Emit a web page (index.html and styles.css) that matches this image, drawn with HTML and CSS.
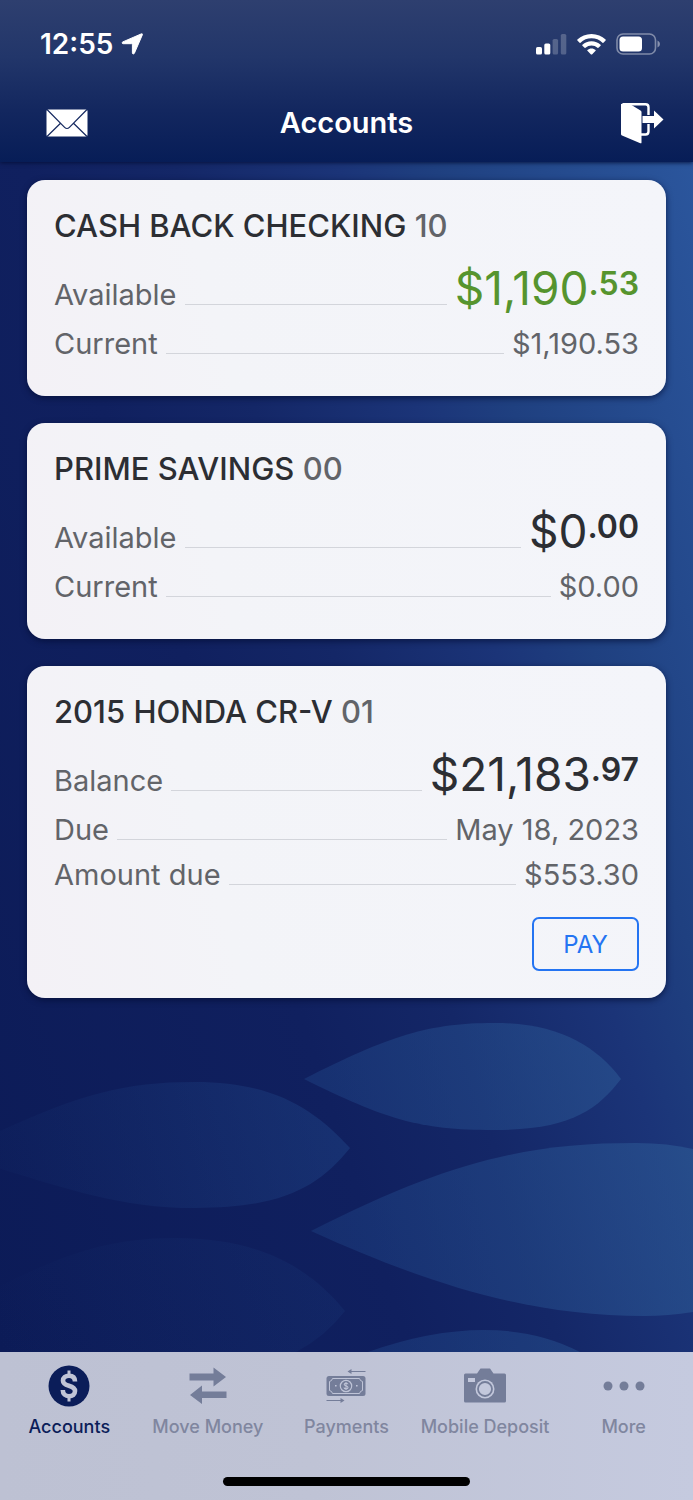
FILE: index.html
```html
<!DOCTYPE html>
<html lang="en">
<head>
<meta charset="utf-8">
<meta name="viewport" content="width=device-width, initial-scale=1">
<title>Accounts</title>
<link rel="stylesheet" href="styles.css">
</head>
<body>
<div class="app">
  <header class="header">
    <div class="status">
      <div class="status-left">
        <span class="time">12:55</span>
        <svg class="location" viewBox="0 0 22 22" aria-hidden="true"><path stroke="#fff" stroke-linejoin="round" d="M20.500.800C21.200.600 21.700 1 21.400 1.700L13.400 20.200C12.900 21.300 11.400 21.200 11.400 19.900V11.900C11.400 11 11.100 10.700 10.200 10.700H2.200C.900 10.700.700 9.400 1.800 8.900Z"/></svg>
      </div>
      <div class="status-right">
        <svg class="signal" viewBox="0 0 31 21" aria-hidden="true"><rect x="0" y="13" width="6" height="7.500" rx="1.600"/><rect x="8.300" y="9.500" width="6" height="11" rx="1.600"/><g opacity=".22"><rect x="16.600" y="5" width="5.500" height="15.500" rx="1.600"/><rect x="24.800" y="0" width="5.500" height="20.500" rx="1.600"/></g></svg>
        <svg class="wifi" viewBox="0 0 29 21" aria-hidden="true"><path d="M14.500 0C9 0 4 2.100.400 5.600Q0 6 .400 6.500L2.600 8.700Q3.100 9.100 3.500 8.700A15.900 15.900 0 0 1 25.500 8.700Q25.900 9.100 26.400 8.700L28.600 6.500Q29 6 28.600 5.600C25 2.100 20 0 14.500 0Z"/><path d="M14.500 7.300C11 7.300 7.800 8.600 5.400 10.800Q5 11.200 5.400 11.700L7.600 13.800Q8 14.200 8.500 13.800A8.900 8.900 0 0 1 20.500 13.800Q21 14.200 21.400 13.800L23.600 11.700Q24 11.200 23.600 10.800C21.200 8.600 18 7.300 14.500 7.300Z"/><path d="M14.500 14.500C12.900 14.500 11.500 15.100 10.400 16Q10 16.400 10.400 16.800L14 20.400Q14.500 20.800 15 20.400L18.600 16.800Q19 16.400 18.600 16C17.500 15.100 16.100 14.500 14.500 14.500Z"/></svg>
        <svg class="battery" viewBox="0 0 45 22" aria-hidden="true"><rect x="1" y="1" width="38.500" height="20" rx="6" fill="none" stroke="#fff" stroke-opacity=".42" stroke-width="1.600"/><rect x="3.500" y="3.500" width="22.500" height="15" rx="3.500"/><path d="M41.500 7.500Q44 8.500 44 11T41.500 14.500Z" opacity=".45"/></svg>
      </div>
    </div>
    <div class="navbar">
      <button class="icon-button" type="button" aria-label="Messages">
        <svg class="mail" viewBox="0 0 42 28" aria-hidden="true"><rect x=".500" y=".500" width="41" height="27" rx="1.500"/><path d="M1 .500 18.600 18.300Q21 20.700 23.400 18.300L41 .500M1 27.500 14.500 14.200M41 27.500 27.500 14.200" fill="none" stroke="#14285f" stroke-width="1.200"/></svg>
      </button>
      <h1 class="title">Accounts</h1>
      <button class="icon-button icon-button-end" type="button" aria-label="Log out">
        <svg class="logout" viewBox="0 0 43 41" aria-hidden="true"><path d="M1.500 1.200H24.500Q27.500 1.200 27.500 4.200V12M27.500 21V28.500Q27.500 31.500 24.500 31.500H20" fill="none" stroke="#fff" stroke-width="2.400"/><path d="M0 1 3 .500H8L19.500 7.500Q20.500 8 20.500 9V39.500Q20.500 40.700 19.300 40.200L1 32.500Q0 32 0 31Z"/><path d="M21.500 13H33V7.500L42.500 16.500 33 25.500V20H21.500Z"/></svg>
      </button>
    </div>
  </header>

  <main class="content">
    <svg class="leaves" viewBox="0 0 693 352" aria-hidden="true">
      <defs>
        <linearGradient id="leaf" gradientUnits="userSpaceOnUse" x1="0" y1="250" x2="693" y2="60"><stop offset="0" stop-color="#1f4686" stop-opacity=".04"/><stop offset=".5" stop-color="#244f92" stop-opacity=".36"/><stop offset="1" stop-color="#305f98" stop-opacity=".56"/></linearGradient>
        <linearGradient id="leaf-dim" gradientUnits="userSpaceOnUse" x1="0" y1="352" x2="350" y2="200"><stop offset="0" stop-color="#1f4686" stop-opacity="0"/><stop offset="1" stop-color="#1f4686" stop-opacity=".2"/></linearGradient>
      </defs>
      <path fill="url(#leaf)" d="M304 79C390 35 430 23 494 23S595 45 621 79C597 110 570 130 494 130S385 119 304 79Z"/>
      <path fill="url(#leaf)" d="M-30 145C70 98 115 82 195 82S315 110 350 148C318 188 280 208 195 208S50 182-30 160Z"/>
      <path fill="url(#leaf)" d="M311 231C450 160 530 143 636 143Q668 143 693 149V312Q668 316 644 316C530 316 430 285 311 231Z"/>
      <path fill="url(#leaf-dim)" d="M-30 300C45 265 90 238 175 238S310 268 345 311Q325 337 296 352H-30Z"/>
      <path fill="url(#leaf)" d="M368 352Q430 330 484 330T580 352Z"/>
    </svg>

    <section class="card">
      <h2 class="card-title">CASH BACK CHECKING <span class="suffix">10</span></h2>
      <dl class="rows">
        <div class="row row-main"><dt>Available</dt><dd class="amount positive">$1,190<span class="cents">.53</span></dd></div>
        <div class="row"><dt>Current</dt><dd>$1,190.53</dd></div>
      </dl>
    </section>

    <section class="card">
      <h2 class="card-title">PRIME SAVINGS <span class="suffix">00</span></h2>
      <dl class="rows">
        <div class="row row-main"><dt>Available</dt><dd class="amount">$0<span class="cents">.00</span></dd></div>
        <div class="row"><dt>Current</dt><dd>$0.00</dd></div>
      </dl>
    </section>

    <section class="card">
      <h2 class="card-title">2015 HONDA CR-V <span class="suffix">01</span></h2>
      <dl class="rows">
        <div class="row row-main"><dt>Balance</dt><dd class="amount">$21,183<span class="cents">.97</span></dd></div>
        <div class="row"><dt>Due</dt><dd>May 18, 2023</dd></div>
        <div class="row"><dt>Amount due</dt><dd>$553.30</dd></div>
      </dl>
      <button class="pay" type="button">PAY</button>
    </section>
  </main>

  <footer class="footer">
    <nav class="tabs" aria-label="Main">
      <a class="tab active" href="#accounts" aria-current="page">
        <svg class="tab-icon" viewBox="0 0 42 42" aria-hidden="true"><circle cx="21" cy="21" r="20.500"/><path d="M27 16.500C27 12.500 24.500 10.700 21 10.700S15 12.700 15 15.700C15 22.500 27 19 27 26C27 29.500 24.500 31.200 21 31.200S14.800 29.200 14.800 25" fill="none" stroke="#c0c4d6" stroke-width="4.600"/><path d="M21 5.500V11M21 31V36.500" stroke="#c0c4d6" stroke-width="3"/></svg>
        <span>Accounts</span>
      </a>
      <a class="tab" href="#move">
        <svg class="tab-icon" viewBox="0 0 42 42" aria-hidden="true"><path d="M2.500 8.500H26.500V2.500L39 12 26.500 21.500V15.500H2.500ZM39.500 26.500H15V20.500L3 30 15 39V33H39.500Z"/></svg>
        <span>Move Money</span>
      </a>
      <a class="tab" href="#payments">
        <svg class="tab-icon" viewBox="0 0 42 42" aria-hidden="true"><rect x="1.500" y="11" width="39" height="20" rx="2.500"/><g fill="none" stroke="#bfc4d7"><path d="M7.500 13.500H34.500Q35 16 37.500 16.500V25.500Q35 26 34.500 28.500H7.500Q7 26 4.500 25.500V16.500Q7 16 7.500 13.500Z" stroke-width="1"/><circle cx="21" cy="21" r="5.700" stroke-width="1.200"/><path d="M23 19.300C22.800 17.800 19.200 17.800 19.200 19.400C19.200 21.200 23 20.500 23 22.600C23 24.300 19.100 24.300 19 22.500M21 17V25" stroke-width="1.100"/></g><path d="M10 20h1.600v1.600H10ZM31 20h1.600v1.600H31Z" fill="#bfc4d7"/><path d="M40.500 6.500H25M1.500 35.500H17" fill="none" stroke="#747d99"/><path d="M22.500 6.500 26.500 4V9ZM19.500 35.500 15.500 33V38Z"/></svg>
        <span>Payments</span>
      </a>
      <a class="tab" href="#deposit">
        <svg class="tab-icon" viewBox="0 0 42 42" aria-hidden="true"><path d="M1.500 8.500H13L16.500 3.500H26L29.500 8.500H40.500Q42 8.500 42 10V36Q42 37.500 40.500 37.500H1.500Q0 37.500 0 36V10Q0 8.500 1.500 8.500Z"/><rect x="4" y="13" width="7" height="4" fill="#c3c8dc"/><circle cx="21" cy="24" r="9.500" fill="#c3c8dc"/><circle cx="21" cy="24" r="7" fill="none" stroke="#747d99" stroke-width="1.800"/></svg>
        <span>Mobile Deposit</span>
      </a>
      <a class="tab" href="#more">
        <svg class="tab-icon" viewBox="0 0 42 42" aria-hidden="true"><circle cx="5" cy="21" r="4.500"/><circle cx="21" cy="21" r="4.500"/><circle cx="37" cy="21" r="4.500"/></svg>
        <span>More</span>
      </a>
    </nav>
    <div class="home-bar"></div>
  </footer>
</div>
</body>
</html>
```
FILE: styles.css
```css
* { box-sizing: border-box; }

body {
  margin: 0;
  font-family: Inter, "Liberation Sans", sans-serif;
  color: #2c2e33;
}

h1, h2, dl, dt, dd { margin: 0; }

svg { display: block; }

button {
  font: inherit;
  background: none;
  border: 0;
  padding: 0;
  cursor: pointer;
}

.app {
  display: flex;
  flex-direction: column;
  min-height: 100vh;
}

.header {
  position: relative;
  z-index: 1;
  color: #fff;
  fill: #fff;
  background: linear-gradient(#2e3f6f 0%, #22366a 35%, #13275f 68%, #071d57 100%);
  box-shadow: 0 1px 4px rgba(3, 13, 50, 0.8);
}

.status {
  display: flex;
  justify-content: space-between;
  align-items: center;
  height: 88px;
  padding: 0 32px 0 40px;
}

.status-left, .status-right { display: flex; align-items: center; }
.status-left { gap: 8px; }
.status-right { gap: 10px; }

.time { font-size: 28px; font-weight: 600; line-height: 32px; }

.location { width: 22px; height: 22px; }
.signal { width: 31px; height: 21px; }
.wifi { width: 29px; height: 21px; }
.battery { width: 45px; height: 22px; }

.navbar {
  display: grid;
  grid-template-columns: 1fr auto 1fr;
  align-items: center;
  height: 74px;
  padding: 0 29px 4px;
}

.icon-button { justify-self: start; padding-left: 17px; }
.icon-button-end { justify-self: end; padding-left: 0; }
.mail { width: 42px; height: 28px; }
.logout { width: 43px; height: 41px; }

.title { font-size: 29px; font-weight: 600; line-height: 36px; }

.content {
  position: relative;
  flex: 1;
  display: flex;
  flex-direction: column;
  gap: 27px;
  padding: 18px 27px 27px;
  background: linear-gradient(72deg, #0c1b57 0%, #10205f 38%, #142767 52%, #1b3478 67%, #1f4080 76%, #2b569d 100%);
}

.leaves {
  position: absolute;
  left: 0;
  bottom: 0;
  width: 100%;
}

.card {
  position: relative;
  display: flex;
  flex-direction: column;
  padding: 26px 27px 27px;
  border-radius: 18px;
  background: linear-gradient(75deg, #f3f1f6, #f3f4f8 30%, #f4f5fa);
  box-shadow: 0 2px 6px rgba(3, 13, 50, 0.7);
}

.card-title { font-size: 31px; font-weight: 500; line-height: 40px; }
.suffix { color: #626469; }

.rows { display: flex; flex-direction: column; margin: 16px 0 3px; }

.row {
  display: flex;
  align-items: baseline;
  gap: 8px;
  font-size: 29px;
  line-height: 45px;
  color: #626469;
}

.row::before {
  content: "";
  order: 1;
  flex: 1;
  border-bottom: 1px solid #d3d5db;
}

.row dd { order: 2; }
.row-main { line-height: 52px; }

.amount { font-size: 46px; color: #2c2e33; }
.positive { color: #56942e; }
.cents { font-size: 32px; font-weight: 600; line-height: 1; vertical-align: 10px; }

.pay {
  align-self: flex-end;
  width: 107px;
  height: 54px;
  margin-top: 17px;
  border: 2px solid #2474f2;
  border-radius: 7px;
  color: #2474f2;
  font-size: 24px;
}

.footer {
  display: flex;
  flex-direction: column;
  align-items: center;
  padding: 13px 0 14px;
  background: linear-gradient(90deg, #bdc1d3, #bfc3d5 45%, #c5cadf);
  box-shadow: 0 -1px 1px #0a1747;
}

.tabs { display: grid; grid-template-columns: repeat(5, 1fr); width: 100%; }

.tab {
  display: flex;
  flex-direction: column;
  align-items: center;
  gap: 8px;
  color: #80869f;
  fill: #747d99;
  font-size: 18px;
  font-weight: 500;
  line-height: 24px;
  text-decoration: none;
  white-space: nowrap;
}

.tab.active { color: #0b1d59; fill: #0b1d59; }
.tab-icon { width: 42px; height: 42px; }

.home-bar {
  width: 247px;
  height: 9px;
  margin-top: 38px;
  border-radius: 5px;
  background: #000;
}
```
